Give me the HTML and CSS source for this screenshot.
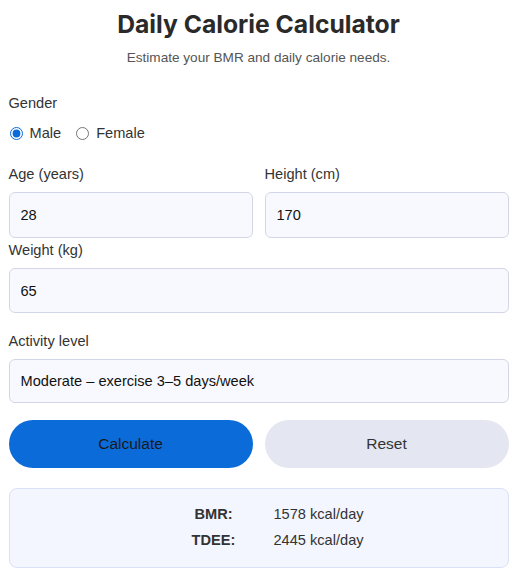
FILE: index.html
```html
<!DOCTYPE html>
<html lang="en">
<head>
<meta charset="utf-8">
<title>Daily Calorie Calculator</title>
<link rel="stylesheet" href="styles.css">
</head>
<body>
<main class="calc">
  <h1 class="title">Daily Calorie Calculator</h1>
  <p class="subtitle">Estimate your BMR and daily calorie needs.</p>

  <div class="field gender">
    <div class="label">Gender</div>
    <div class="radios">
      <label class="radio"><input type="radio" name="g" checked> Male</label>
      <label class="radio"><input type="radio" name="g"> Female</label>
    </div>
  </div>

  <div class="row">
    <div class="field">
      <label class="label">Age (years)</label>
      <input class="input" type="text" value="28">
    </div>
    <div class="field">
      <label class="label">Height (cm)</label>
      <input class="input" type="text" value="170">
    </div>
  </div>

  <div class="field weight">
    <label class="label">Weight (kg)</label>
    <input class="input" type="text" value="65">
  </div>

  <div class="field activity">
    <label class="label">Activity level</label>
    <select class="input select">
      <option>Moderate – exercise 3–5 days/week</option>
    </select>
  </div>

  <div class="buttons">
    <button class="btn primary">Calculate</button>
    <button class="btn secondary">Reset</button>
  </div>

  <div class="result">
    <div class="res-grid">
      <span class="res-label">BMR:</span><span class="res-value">1578 kcal/day</span>
      <span class="res-label">TDEE:</span><span class="res-value">2445 kcal/day</span>
    </div>
  </div>
</main>
</body>
</html>
```

FILE: styles.css
```css
* { box-sizing: border-box; }
html, body { margin: 0; padding: 0; background: #fff; }
body {
  font-family: "Liberation Sans", Arial, sans-serif;
  font-size: 14.6px;
  color: #333;
}
.calc {
  max-width: 500px;
  margin: 0 auto;
  padding-top: 9px;
}
.title {
  font-family: Inter, "Liberation Sans", sans-serif;
  font-weight: 700;
  font-size: 24.7px;
  line-height: 30px;
  margin: 0;
  text-align: center;
  color: #2a2a2a;
}
.subtitle {
  margin: 10px 0 0;
  text-align: center;
  color: #555;
  font-size: 13.6px;
  line-height: 18px;
}
.label {
  display: block;
  line-height: 18px;
  color: #333;
}
.gender { margin-top: 27px; }
.radios {
  display: flex;
  gap: 14px;
  margin-top: 12px;
  height: 18px;
  align-items: center;
}
.radio {
  display: flex;
  align-items: center;
  gap: 7px;
  line-height: 18px;
}
.radio input {
  margin: 0 0 0 1px;
  width: 13px;
  height: 13px;
  accent-color: #0b6bd8;
}
.row {
  display: grid;
  grid-template-columns: 1fr 1fr;
  gap: 12px;
  margin-top: 23px;
}
.field .label + .input { margin-top: 9px; }
.input {
  display: block;
  width: 100%;
  height: 46px;
  padding: 0 11px;
  border: 1px solid #d3d6e6;
  border-radius: 6px;
  background: #f8f9fe;
  font-family: "Liberation Sans", Arial, sans-serif;
  font-size: 14.6px;
  color: #111;
  outline: none;
}
.weight { margin-top: 3px; }
.weight .input { height: 45px; }
.activity { margin-top: 19px; }
.select {
  height: 44px;
  appearance: none;
  -webkit-appearance: none;
}
.buttons {
  display: grid;
  grid-template-columns: 1fr 1fr;
  gap: 12px;
  margin-top: 17px;
}
.btn {
  height: 48px;
  border: none;
  border-radius: 24px;
  font-family: "Liberation Sans", Arial, sans-serif;
  font-size: 15.5px;
}
.primary { background: #0a6bd9; color: #1a1a1a; }
.secondary { background: #e4e6f2; color: #333; }
.result {
  margin-top: 20px;
  height: 80px;
  border: 1px solid #d9e1f6;
  border-radius: 8px;
  background: #f3f6fe;
  display: flex;
  align-items: center;
  justify-content: center;
}
.res-grid {
  display: grid;
  grid-template-columns: 120px 90px;
  row-gap: 8px;
  line-height: 18px;
  white-space: nowrap;
  margin-top: -2px;
}
.res-label { font-weight: 700; text-align: center; color: #333; }
.res-value { color: #333; }
```
